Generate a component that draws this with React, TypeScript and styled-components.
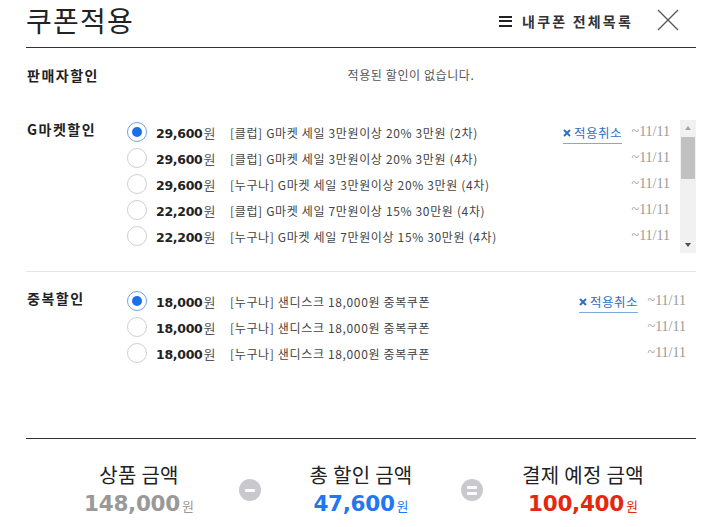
import React from "react";
import styled, { createGlobalStyle } from "styled-components";

const Global = createGlobalStyle`
  html, body { margin: 0; padding: 0; background: #fff; }
  body { font-family: "Noto Sans CJK KR", "Noto Sans", sans-serif; color: #222; }
  * { box-sizing: border-box; }
`;

const Page = styled.div`
  width: 715px;
  padding: 0 19px 0 26px;
`;

const Header = styled.header`
  height: 48px;
  display: flex;
  align-items: center;
  padding-bottom: 7px;
  border-bottom: 1px solid #333;
`;

const Title = styled.h1`
  margin: 0;
  flex: 1;
  font-size: 28px;
  font-weight: 400;
  line-height: 30px;
  letter-spacing: 1.2px;
  color: #222;
`;

const ListLink = styled.a`
  display: flex;
  align-items: center;
  gap: 10px;
  font-size: 14px;
  font-weight: 700;
  letter-spacing: 2.2px;
  color: #333;
  text-decoration: none;
  margin-top: 2px;
`;

const Burger = styled.span`
  display: flex;
  flex-direction: column;
  gap: 2.5px;
  width: 13px;
  & > i { display: block; height: 2px; background: #222; }
`;

const CloseBtn = styled.button`
  border: 0;
  background: none;
  padding: 0;
  margin: 0 17px 0 24px;
  width: 22px;
  height: 22px;
  display: flex;
`;

const Section = styled.section<{ $pt: number; $pb: number; $line?: boolean }>`
  display: flex;
  padding-top: ${(p) => p.$pt}px;
  padding-bottom: ${(p) => p.$pb}px;
  border-bottom: ${(p) => (p.$line ? "1px solid #e6e6e6" : "none")};
`;

const Label = styled.div`
  width: 100px;
  flex: none;
  padding-left: 1px;
  font-size: 14px;
  font-weight: 700;
  line-height: 20px;
  letter-spacing: 1.5px;
  color: #222;
`;

const Empty = styled.div`
  flex: 1;
  text-align: center;
  font-size: 12px;
  line-height: 20px;
  letter-spacing: 0.6px;
  color: #555;
`;

const Body = styled.div`
  flex: 1;
  display: flex;
  min-width: 0;
`;

const List = styled.ul<{ $h?: number }>`
  list-style: none;
  margin: 0;
  padding: 0;
  flex: 1;
  ${(p) => (p.$h ? `height: ${p.$h}px; overflow: hidden;` : "")}
`;

const Row = styled.li<{ $padRight: number }>`
  display: flex;
  align-items: center;
  height: 26px;
  padding-left: 1px;
  padding-right: ${(p) => p.$padRight}px;
`;

const Radio = styled.span<{ $on: boolean }>`
  flex: none;
  width: 20px;
  height: 20px;
  border-radius: 50%;
  border: 1px solid ${(p) => (p.$on ? "#6aa3ec" : "#cfcfcf")};
  display: flex;
  align-items: center;
  justify-content: center;
  margin-right: 9px;
  &::after {
    content: "";
    width: 10px;
    height: 10px;
    border-radius: 50%;
    background: ${(p) => (p.$on ? "#1d6fe8" : "transparent")};
  }
`;

const Price = styled.span`
  flex: none;
  width: 74px;
  display: flex;
  align-items: baseline;
  font-family: "DejaVu Sans", Verdana, sans-serif;
  font-weight: 700;
  font-size: 12.5px;
  letter-spacing: -0.3px;
  color: #222;
  & > small {
    font-family: "Noto Sans CJK KR", sans-serif;
    font-weight: 400;
    font-size: 13px;
    color: #555;
    margin-left: 1px;
    letter-spacing: 0;
  }
`;

const Desc = styled.span`
  flex: 1;
  font-size: 12px;
  color: #444;
  white-space: nowrap;
  letter-spacing: 0.65px;
`;

const Cancel = styled.a`
  display: flex;
  align-items: center;
  gap: 3px;
  font-size: 12.5px;
  letter-spacing: 0.5px;
  color: #2f6fc4;
  text-decoration: none;
  border-bottom: 1px solid #7fa9dc;
  padding-bottom: 1px;
  margin-top: 3px;
  margin-right: 8px;
`;

const DateText = styled.span`
  flex: none;
  width: 40px;
  text-align: right;
  font-family: "Liberation Serif", "Times New Roman", serif;
  font-size: 14px;
  color: #999;
`;

const ScrollTrack = styled.div`
  flex: none;
  width: 16px;
  height: 133px;
  margin-top: 1px;
  background: #f1f1f1;
  display: flex;
  flex-direction: column;
  align-items: center;
`;

const Arrow = styled.span<{ $dir: "up" | "down"; $c: string }>`
  flex: none;
  width: 0;
  height: 0;
  margin: ${(p) => (p.$dir === "up" ? "6px 0 0" : "0 0 6px")};
  border-left: 3.5px solid transparent;
  border-right: 3.5px solid transparent;
  ${(p) =>
    p.$dir === "up"
      ? `border-bottom: 4px solid ${p.$c};`
      : `border-top: 4px solid ${p.$c};`}
`;

const ThumbArea = styled.div`
  flex: 1;
  width: 100%;
  padding: 7px 1px 0;
`;

const Thumb = styled.div`
  height: 42px;
  background: #c1c1c1;
`;

const Spacer = styled.div`
  height: 72px;
`;

const Summary = styled.div`
  border-top: 1px solid #333;
  padding-top: 22px;
  display: flex;
  justify-content: center;
  align-items: center;
  gap: 20px;
`;

const Col = styled.div`
  width: 160px;
  display: flex;
  flex-direction: column;
  align-items: center;
`;

const SumLabel = styled.div`
  font-size: 20px;
  line-height: 28px;
  letter-spacing: 0.3px;
  color: #222;
`;

const SumValue = styled.div<{ $c: string }>`
  display: flex;
  align-items: baseline;
  line-height: 30px;
  font-family: "DejaVu Sans", Verdana, sans-serif;
  font-weight: 700;
  font-size: 21.5px;
  letter-spacing: -0.3px;
  color: ${(p) => p.$c};
  & > small {
    font-family: "Noto Sans CJK KR", sans-serif;
    font-size: 13px;
    font-weight: 400;
    margin-left: 2px;
    letter-spacing: 0;
  }
`;

const Op = styled.span`
  flex: none;
  width: 22px;
  height: 22px;
  border-radius: 50%;
  background: #c9c9cd;
  display: flex;
  flex-direction: column;
  align-items: center;
  justify-content: center;
  gap: 3px;
  margin-top: -2px;
  & > i { display: block; width: 10px; height: 3px; background: #fff; border-radius: 1px; }
`;

type Coupon = { price: string; desc: string; on?: boolean };

const gmarket: Coupon[] = [
  { price: "29,600", desc: "[클럽] G마켓 세일 3만원이상 20% 3만원 (2차)", on: true },
  { price: "29,600", desc: "[클럽] G마켓 세일 3만원이상 20% 3만원 (4차)" },
  { price: "29,600", desc: "[누구나] G마켓 세일 3만원이상 20% 3만원 (4차)" },
  { price: "22,200", desc: "[클럽] G마켓 세일 7만원이상 15% 30만원 (4차)" },
  { price: "22,200", desc: "[누구나] G마켓 세일 7만원이상 15% 30만원 (4차)" },
];

const dup: Coupon[] = [
  { price: "18,000", desc: "[누구나] 샌디스크 18,000원 중복쿠폰", on: true },
  { price: "18,000", desc: "[누구나] 샌디스크 18,000원 중복쿠폰" },
  { price: "18,000", desc: "[누구나] 샌디스크 18,000원 중복쿠폰" },
];

const XMark = () => (
  <svg width="8" height="8" viewBox="0 0 8 8">
    <path d="M1 1L7 7M7 1L1 7" stroke="#2f6fc4" strokeWidth="2" />
  </svg>
);

const CouponRow = ({ c, padRight }: { c: Coupon; padRight: number }) => (
  <Row $padRight={padRight}>
    <Radio $on={!!c.on} />
    <Price>
      {c.price}
      <small>원</small>
    </Price>
    <Desc>{c.desc}</Desc>
    {c.on && (
      <Cancel href="#">
        <XMark />
        적용취소
      </Cancel>
    )}
    <DateText>~11/11</DateText>
  </Row>
);

export default function App() {
  return (
    <>
      <Global />
      <Page>
        <Header>
          <Title>쿠폰적용</Title>
          <ListLink href="#">
            <Burger>
              <i />
              <i />
              <i />
            </Burger>
            내쿠폰 전체목록
          </ListLink>
          <CloseBtn aria-label="닫기">
            <svg width="22" height="22" viewBox="0 0 22 22">
              <path d="M1 1L21 21M21 1L1 21" stroke="#555" strokeWidth="1.3" />
            </svg>
          </CloseBtn>
        </Header>

        <Section $pt={17} $pb={0}>
          <Label>판매자할인</Label>
          <Empty>적용된 할인이 없습니다.</Empty>
        </Section>

        <Section $pt={34} $pb={18} $line>
          <Label>G마켓할인</Label>
          <Body>
            <List $h={130}>
              {gmarket.map((c, i) => (
                <CouponRow key={i} c={c} padRight={10} />
              ))}
            </List>
            <ScrollTrack>
              <Arrow $dir="up" $c="#a3a3a3" />
              <ThumbArea>
                <Thumb />
              </ThumbArea>
              <Arrow $dir="down" $c="#505050" />
            </ScrollTrack>
          </Body>
        </Section>

        <Section $pt={16} $pb={0}>
          <Label>중복할인</Label>
          <Body>
            <List>
              {dup.map((c, i) => (
                <CouponRow key={i} c={c} padRight={10} />
              ))}
            </List>
          </Body>
        </Section>
        <Spacer />

        <Summary>
          <Col>
            <SumLabel>상품 금액</SumLabel>
            <SumValue $c="#999">
              148,000<small>원</small>
            </SumValue>
          </Col>
          <Op>
            <i />
          </Op>
          <Col>
            <SumLabel>총 할인 금액</SumLabel>
            <SumValue $c="#1f78f0">
              47,600<small>원</small>
            </SumValue>
          </Col>
          <Op>
            <i />
            <i />
          </Op>
          <Col>
            <SumLabel>결제 예정 금액</SumLabel>
            <SumValue $c="#e2290f">
              100,400<small>원</small>
            </SumValue>
          </Col>
        </Summary>
      </Page>
    </>
  );
}
